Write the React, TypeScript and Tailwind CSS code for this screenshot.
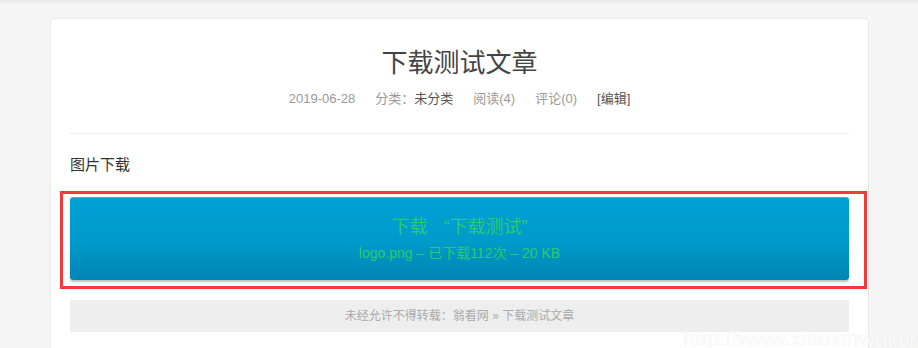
export default function App() {
  const font = { fontFamily: '"Liberation Sans", "Noto Sans CJK SC", sans-serif' };

  return (
    <div className="relative h-[348px] w-[918px] overflow-hidden bg-[#f5f5f5]" style={font}>
      <div className="h-[4px] bg-gradient-to-b from-[#e6e6e6] to-[#f5f5f5]" />
      <div className="ml-[50px] mt-[14px] w-[819px] rounded-[4px] border border-[#e9e9e9] bg-white px-[19px] pb-[40px] pt-[24px]">
        <header className="border-b border-[#eeeeee] pb-[24px] text-center">
          <h1 className="text-[26px] leading-[40px] text-[#444]">下载测试文章</h1>
          <div className="mt-[6px] flex justify-center text-[13px] leading-[20px] text-[#999]">
            <span className="mx-[10px]">2019-06-28</span>
            <span className="mx-[10px]">
              分类：<span className="text-[#555]">未分类</span>
            </span>
            <span className="mx-[10px]">阅读(4)</span>
            <span className="mx-[10px]">评论(0)</span>
            <span className="mx-[10px] text-[#555]">[编辑]</span>
          </div>
        </header>

        <p className="mt-[20px] text-[15px] leading-[22px] text-[#333]">图片下载</p>

        <div className="ml-[-10px] mr-[-18px] mt-[15px] border-[3px] border-[#f33a3a] pb-[6px] pl-[7px] pr-[15px] pt-[3px]">
          <a className="block h-[83px] rounded-[3px] border-t border-[#38b6e0] bg-gradient-to-b from-[#00a1d3] via-[#009bcc] to-[#0086b3] pt-[16px] text-center text-[#2bcb6c] shadow-[0_2px_2px_rgba(0,0,0,0.25)]">
            <div className="text-[18px] leading-[26px]">
              下载<span className="ml-[16px]">“下载测试”</span>
            </div>
            <div className="mt-[2px] text-[14px] leading-[22px]">logo.png – 已下载112次 – 20 KB</div>
          </a>
        </div>

        <div className="mt-[11px] rounded-[2px] bg-[#eeeeee] py-[6px] text-center text-[12px] leading-[20px] text-[#aaaaaa]">
          未经允许不得转载：翁看网 » 下载测试文章
        </div>
      </div>

      <div className="absolute bottom-[-6px] left-[683px] text-[22px] leading-[30px] text-white/95 [text-shadow:0_0_1px_rgba(0,0,0,0.12)]" style={{ fontFamily: '"Liberation Sans", Arial, sans-serif' }}>
        http://www.xiaoxinwai.cn
      </div>
    </div>
  );
}
